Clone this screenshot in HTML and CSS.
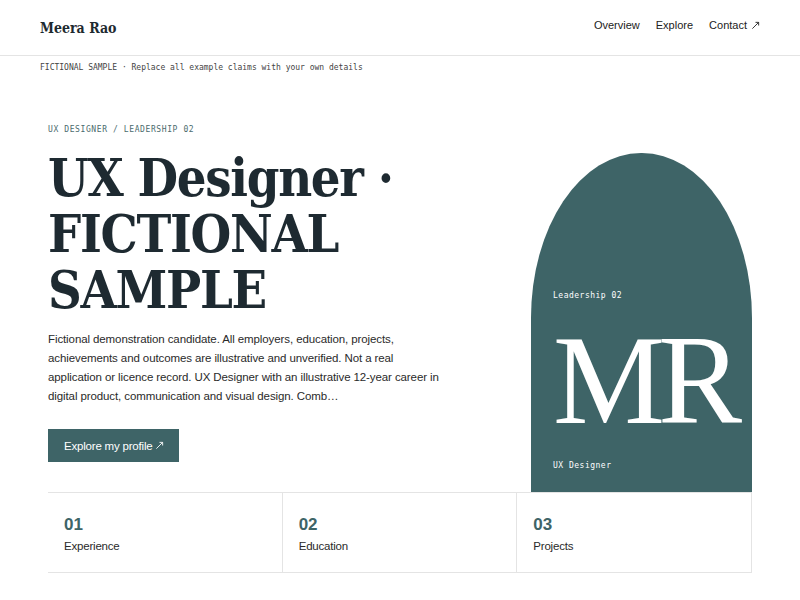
FILE: index.html
```html
<!DOCTYPE html>
<html lang="en">

<head>
  <meta charset="UTF-8">
  <meta name="viewport" content="width=device-width, initial-scale=1.0">
  <title>Meera Rao · UX Designer</title>
  <link rel="stylesheet" href="styles.css">
</head>

<body>
  <header class="site-header">
    <a href="javascript:;" class="logo">Meera Rao</a>
    <nav class="nav">
      <a href="javascript:;">Overview</a>
      <a href="javascript:;">Explore</a>
      <a href="javascript:;">Contact <svg class="arrow" viewBox="0 0 10 10"><path d="M1.5 8.5 L8.5 1.5 M5 1.5 H8.5 V5" /></svg></a>
    </nav>
  </header>

  <!-- 提示条 -->
  <div class="notice">FICTIONAL SAMPLE · Replace all example claims with your own details</div>

  <main class="wrap">
    <section class="hero">
      <div class="hero-text">
        <p class="kicker">UX DESIGNER / LEADERSHIP 02</p>
        <h1 class="title">UX Designer · FICTIONAL SAMPLE</h1>
        <p class="intro">Fictional demonstration candidate. All employers, education, projects, achievements and outcomes are illustrative and unverified. Not a real application or licence record. UX Designer with an illustrative 12-year career in digital product, communication and visual design. Comb…</p>
        <a href="javascript:;" class="btn">Explore my profile <svg class="arrow" viewBox="0 0 10 10"><path d="M1.5 8.5 L8.5 1.5 M5 1.5 H8.5 V5" /></svg></a>
      </div>

      <!-- 拱形头像 -->
      <div class="arch">
        <span class="arch-label">Leadership 02</span>
        <span class="monogram">MR</span>
        <span class="arch-label">UX Designer</span>
      </div>
    </section>

    <ul class="cards">
      <li class="card">
        <strong>01</strong>
        <span>Experience</span>
      </li>
      <li class="card">
        <strong>02</strong>
        <span>Education</span>
      </li>
      <li class="card">
        <strong>03</strong>
        <span>Projects</span>
      </li>
    </ul>
  </main>
</body>

</html>
```

FILE: styles.css
```css
* {
  margin: 0;
  padding: 0;
  box-sizing: border-box;
}

ul {
  list-style: none;
}

a {
  text-decoration: none;
  color: inherit;
}

body {
  font-family: "Liberation Sans", Arial, sans-serif;
  color: #222;
  background-color: #fff;
}

.arrow {
  width: 9px;
  height: 9px;
  fill: none;
  stroke: currentColor;
  stroke-width: 1;
}

/* 顶部导航 */
.site-header {
  height: 56px;
  padding: 0 40px;
  display: flex;
  align-items: center;
  justify-content: space-between;
  border-bottom: 1px solid #e4e4e4;
}

.logo {
  font-family: "DejaVu Serif Condensed", "Liberation Serif", serif;
  font-weight: bold;
  font-size: 14px;
  color: #1e2a30;
}

.nav {
  display: flex;
  gap: 16px;
  margin-bottom: 5px;
  font-size: 11px;
  color: #222;
}

.nav a {
  display: flex;
  align-items: center;
  gap: 4px;
}

.notice {
  padding: 7px 40px;
  font-family: "DejaVu Sans Mono", monospace;
  font-size: 8px;
  line-height: 10px;
  color: #444;
}

/* 主体 */
.wrap {
  width: 704px;
  margin: 0 auto;
  padding-bottom: 28px;
}

.hero {
  display: grid;
  grid-template-columns: 1fr 221px;
  gap: 40px;
  align-items: end;
  padding-top: 45px;
}

.hero-text {
  padding-bottom: 30px;
}

.kicker {
  font-family: "DejaVu Sans Mono", monospace;
  font-size: 8px;
  line-height: 10px;
  letter-spacing: .6px;
  color: #4a6b6d;
}

.title {
  margin-top: 15px;
  font-family: "DejaVu Serif Condensed", "Liberation Serif", serif;
  font-weight: bold;
  font-size: 52px;
  line-height: 56px;
  letter-spacing: -0.025em;
  color: #1e2a31;
}

.intro {
  margin-top: 12px;
  max-width: 400px;
  font-size: 11.5px;
  line-height: 19px;
  letter-spacing: -0.1px;
  color: #2a2a2a;
}

.btn {
  margin-top: 23px;
  height: 33px;
  padding: 0 15px 0 16px;
  display: inline-flex;
  align-items: center;
  gap: 3px;
  background-color: #3e6467;
  color: #fff;
  font-size: 11.5px;
  letter-spacing: -0.2px;
}

.arch {
  height: 339px;
  padding: 0 22px 21px;
  display: flex;
  flex-direction: column;
  justify-content: flex-end;
  background-color: #3e6467;
  border-radius: 110px 110px 0 0 / 165px 165px 0 0;
  color: #fff;
}

.arch-label {
  font-family: "DejaVu Sans Mono", monospace;
  font-size: 8px;
  line-height: 10px;
  letter-spacing: .5px;
}

.monogram {
  margin: 16px 0 17px;
  font-family: "Liberation Serif", "Times New Roman", serif;
  font-size: 126px;
  line-height: 127px;
  letter-spacing: -0.055em;
}

/* 底部三栏 */
.cards {
  display: grid;
  grid-template-columns: repeat(3, 1fr);
  border-top: 1px solid #e4e4e4;
  border-bottom: 1px solid #e4e4e4;
}

.card {
  height: 79px;
  padding: 21px 16px 0;
  display: flex;
  flex-direction: column;
  border-right: 1px solid #e4e4e4;
}

.card strong {
  font-size: 17px;
  line-height: 22px;
  color: #3e6467;
}

.card span {
  margin-top: 3px;
  font-size: 11.5px;
  line-height: 14px;
  letter-spacing: -0.2px;
  color: #2a2a2a;
}
```
